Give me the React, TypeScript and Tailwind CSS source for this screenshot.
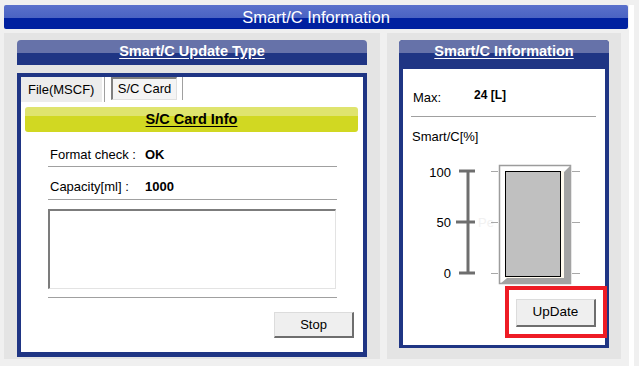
const navy = "bg-[#1f3584]";

const WinButton = ({ label, className }: { label: string; className: string }) => {
  return (
    <button
      type="button"
      className={`flex items-center justify-center border-t border-l border-[#dcdcdc] border-r-2 border-b-2 border-r-[#6e6e6e] border-b-[#6e6e6e] bg-[#efefef] text-black ${className}`}
    >
      {label}
    </button>
  );
};

const SectionHeader = ({ title }: { title: string }) => {
  return (
    <div className="flex h-[24px] items-center justify-center">
      <span className="text-[14.5px] font-bold text-white underline underline-offset-2">{title}</span>
    </div>
  );
};

const Gauge = () => {
  const ticks = [26, 77, 128];
  return (
    <svg width="202" height="141" viewBox="0 0 202 141" className="block">
      <text x="48" y="31.5" textAnchor="end" fontSize="13" fontFamily="Liberation Sans, Arial, sans-serif" fill="#000">
        100
      </text>
      <text x="48" y="82" textAnchor="end" fontSize="13" fontFamily="Liberation Sans, Arial, sans-serif" fill="#000">
        50
      </text>
      <text x="48" y="133" textAnchor="end" fontSize="13" fontFamily="Liberation Sans, Arial, sans-serif" fill="#000">
        0
      </text>
      <text x="75" y="82" fontSize="13" fontFamily="Liberation Sans, Arial, sans-serif" fill="#f1f1f1">
        Pe
      </text>
      {/* scale */}
      <line x1="65" y1="26" x2="65" y2="128" stroke="#6e6e6e" strokeWidth="3" />
      <line x1="56" y1="26" x2="72" y2="26" stroke="#6e6e6e" strokeWidth="3" />
      <line x1="53" y1="77" x2="72" y2="77" stroke="#6e6e6e" strokeWidth="3" />
      <line x1="56" y1="128" x2="72" y2="128" stroke="#6e6e6e" strokeWidth="3" />
      {ticks.map((y) => (
        <g key={y}>
          <line x1="88" y1={y + 0.5} x2="95" y2={y + 0.5} stroke="#a8a8a8" strokeWidth="1" />
          <line x1="169" y1={y + 0.5} x2="177" y2={y + 0.5} stroke="#a8a8a8" strokeWidth="1" />
        </g>
      ))}
      {/* bar frame */}
      <rect x="96.5" y="20.5" width="71" height="118" fill="#ffffff" stroke="#9c9c9c" strokeWidth="1.5" />
      <polygon points="168,20 168,139 97,139 104,133 161,133 161,27" fill="#a3a3a3" />
      <rect x="157" y="26" width="4" height="107" fill="#fffaee" />
      <rect x="102" y="131" width="59" height="2" fill="#fffaee" />
      <rect x="102.5" y="26.5" width="55" height="105" fill="#c0c0c0" stroke="#000" strokeWidth="1" />
    </svg>
  );
};

export default function App() {
  return (
    <div className="h-[366px] w-[639px] overflow-hidden bg-[#f0f0f0] font-['Liberation_Sans',Arial,sans-serif] text-black">
      <div className="flex h-full gap-[1px] pl-[4px] pt-[5px]">
        <div className="flex w-[624px] flex-col">
          {/* title bar */}
          <div className="flex h-[24px] items-center justify-center rounded-[2px] bg-[linear-gradient(to_bottom,#5a71cc_0%,#4a63c2_54%,#0021a0_54%,#0021a0_100%)]">
            <span className="text-[16.5px] text-white">Smart/C Information</span>
          </div>

          <div className="mt-[4px] flex gap-[7px]">
            {/* left panel */}
            <div className="h-[326px] w-[376px] bg-[#e4e4e4] pl-[13px] pt-[7px]">
              <div className="h-[25px] w-[350px] rounded-t-[4px] bg-[linear-gradient(to_bottom,#6672a9_0%,#6672a9_52%,#1f3584_52%,#1f3584_100%)]">
                <SectionHeader title="Smart/C Update Type" />
              </div>
              <div className={`mt-[8px] h-[284px] w-[350px] ${navy} px-[4px] pt-[4px] pb-[5px]`}>
                <div className="flex h-[275px] flex-col bg-white">
                  {/* tabs */}
                  <div className="flex h-[25px] items-start">
                    <div className="flex h-[25px] w-[81px] items-center bg-[#ececec] pl-[7px] text-[13px]">File(MSCF)</div>
                    <div className="ml-[2px] h-[25px] w-px bg-[#a0a0a0]" />
                    <div className="ml-[6px] flex h-[23px] w-[66px] items-center justify-center border-t-2 border-l-2 border-r border-b border-t-[#808080] border-l-[#808080] border-r-[#e0e0e0] border-b-[#e0e0e0] bg-[#f4f4f4] text-[13px]">
                      S/C Card
                    </div>
                    <div className="ml-[5px] h-[23px] w-px bg-[#a0a0a0]" />
                  </div>

                  <div className="mt-[5px] ml-[4px] flex h-[25px] w-[333px] items-center justify-center rounded-[3px] bg-[linear-gradient(to_bottom,#dfe46e_0%,#dfe46e_36%,#d1d822_36%,#d1d822_100%)]">
                    <span className="text-[14.5px] font-bold underline underline-offset-2">S/C Card Info</span>
                  </div>

                  <div className="ml-[27px] w-[289px]">
                    <div className="flex border-b border-[#a0a0a0] pt-[15px] pb-[3px] pl-[2px] text-[13px] leading-[16px]">
                      <span className="w-[95px]">Format check :</span>
                      <span className="font-bold">OK</span>
                    </div>
                    <div className="flex border-b border-[#a0a0a0] pt-[12px] pb-[4px] pl-[2px] text-[13px] leading-[16px]">
                      <span className="w-[95px]">Capacity[ml] :</span>
                      <span className="font-bold">1000</span>
                    </div>
                    <div className="mt-[9px] h-[80px] w-[288px] border-t-2 border-l-2 border-r border-b border-t-[#7c7c7c] border-l-[#7c7c7c] border-r-[#e3e3e3] border-b-[#e3e3e3] bg-white" />
                    <div className="mt-[8px] h-px w-[289px] bg-[#a0a0a0]" />
                  </div>

                  <div className="mt-[14px] flex justify-end pr-[9px]">
                    <WinButton label="Stop" className="h-[26px] w-[80px] text-[13px]" />
                  </div>
                </div>
              </div>
            </div>

            {/* right panel */}
            <div className="h-[326px] w-[234px] bg-[#e4e4e4] pl-[12px] pt-[7px]">
              <div className={`flex h-[308px] w-[210px] flex-col rounded-t-[4px] ${navy}`}>
                <div className="h-[29px] rounded-t-[4px] bg-[linear-gradient(to_bottom,#6672a9_0%,#6672a9_13px,#1f3584_13px,#1f3584_100%)]">
                  <SectionHeader title="Smart/C Information" />
                </div>
                <div className="relative mx-[4px] flex h-[276px] flex-col bg-white">
                  <div className="flex items-start pl-[10px] pt-[21px] text-[13px] leading-[16px]">
                    <span className="w-[61px]">Max:</span>
                    <span className="-mt-[3px] text-[12px] font-bold">24 [L]</span>
                  </div>
                  <div className="mt-[10px] ml-[8px] h-px w-[185px] bg-[#a0a0a0]" />
                  <div className="mt-[12px] pl-[9px] text-[13px] leading-[16px]">Smart/C[%]</div>
                  <Gauge />
                  <div className="mt-[13px] pl-[113px]">
                    <WinButton label="UpDate" className="h-[28px] w-[80px] text-[13.5px]" />
                  </div>
                  <div className="absolute left-[102px] top-[217px] h-[52px] w-[102px] border-[4px] border-[#ee1c25]" />
                </div>
              </div>
            </div>
          </div>
        </div>
        <div className="w-[5px] self-stretch bg-white" />
      </div>
    </div>
  );
}
